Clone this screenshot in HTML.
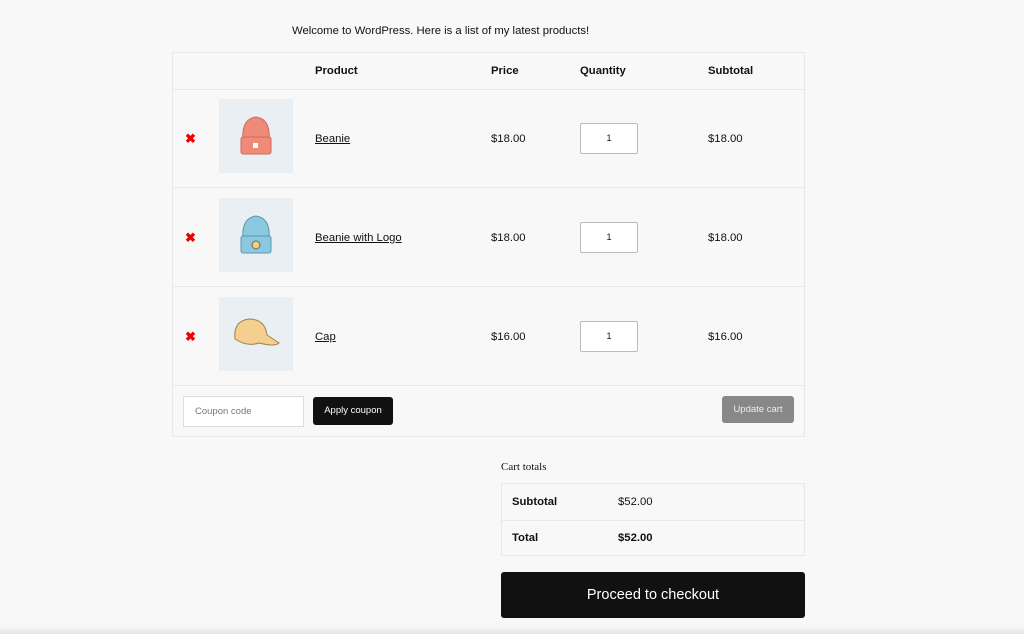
<!DOCTYPE html>
<html><head><style>
body{margin:0;width:1024px;height:634px;background:#f8f8f8;font-family:"Liberation Sans",sans-serif;color:#111;position:relative;overflow:hidden}
.a{position:absolute}
.t{font-size:11.3px}
.b{font-weight:bold}
.line{position:absolute;height:1px;background:#e8e8e8}
.img{position:absolute;left:219px;width:74px;height:74px;background:#eaeff4}
.x{position:absolute;left:185px;color:#e00;font-size:13px;font-weight:bold}
.q{position:absolute;left:580px;width:58px;height:31px;border:1px solid #bbb;border-radius:2px;background:#fff;font-size:9px;text-align:center;line-height:29px;box-sizing:border-box}
u{text-decoration:underline}
</style></head><body>
<div class="a t" style="left:292px;top:25px">Welcome to WordPress. Here is a list of my latest products!</div>
<div class="a" style="left:172px;top:52px;width:633px;height:385px;border:1px solid #e8e8e8;box-sizing:border-box"></div>
<div class="line" style="left:172px;width:633px;top:89px"></div>
<div class="line" style="left:172px;width:633px;top:187px"></div>
<div class="line" style="left:172px;width:633px;top:286px"></div>
<div class="line" style="left:172px;width:633px;top:385px"></div>
<div class="a t b" style="left:315px;top:65px">Product</div>
<div class="a t b" style="left:491px;top:65px">Price</div>
<div class="a t b" style="left:580px;top:65px">Quantity</div>
<div class="a t b" style="left:708px;top:65px">Subtotal</div>

<div class="x" style="top:131px">✖</div>
<div class="img" style="top:99px"><svg width="74" height="74"><path d="M24 42 Q22 20 37 18 Q52 20 50 42Z" fill="#f08a78" stroke="#d06a5a"/><rect x="22" y="38" width="30" height="17" rx="2" fill="#f08a78" stroke="#d06a5a"/><rect x="34" y="44" width="5" height="5" fill="#fff"/></svg></div>
<div class="a t" style="left:315px;top:133px"><u>Beanie</u></div>
<div class="a t" style="left:491px;top:133px">$18.00</div>
<div class="q" style="top:123px">1</div>
<div class="a t" style="left:708px;top:133px">$18.00</div>

<div class="x" style="top:230px">✖</div>
<div class="img" style="top:198px"><svg width="74" height="74"><path d="M24 42 Q22 20 37 18 Q52 20 50 42Z" fill="#8cc8e0" stroke="#5a98b0"/><rect x="22" y="38" width="30" height="17" rx="2" fill="#8cc8e0" stroke="#5a98b0"/><circle cx="37" cy="47" r="4" fill="#f0d080" stroke="#666"/></svg></div>
<div class="a t" style="left:315px;top:232px"><u>Beanie with Logo</u></div>
<div class="a t" style="left:491px;top:232px">$18.00</div>
<div class="q" style="top:222px">1</div>
<div class="a t" style="left:708px;top:232px">$18.00</div>

<div class="x" style="top:329px">✖</div>
<div class="img" style="top:297px"><svg width="74" height="74"><path d="M16 42 Q14 24 30 22 Q46 22 48 38 L60 46 Q56 50 40 46 Q28 50 16 42Z" fill="#f3cf90" stroke="#a08050"/></svg></div>
<div class="a t" style="left:315px;top:331px"><u>Cap</u></div>
<div class="a t" style="left:491px;top:331px">$16.00</div>
<div class="q" style="top:321px">1</div>
<div class="a t" style="left:708px;top:331px">$16.00</div>

<div class="a" style="left:183px;top:396px;width:121px;height:31px;border:1px solid #ddd;background:#fff;box-sizing:border-box;font-size:9.5px;color:#777;line-height:29px;padding-left:11px">Coupon code</div>
<div class="a" style="left:313px;top:397px;width:80px;height:28px;background:#111;border-radius:3px;color:#fff;font-size:9.5px;line-height:28px;text-align:center">Apply coupon</div>
<div class="a" style="left:722px;top:396px;width:72px;height:27px;background:#888;border-radius:3px;color:#eee;font-size:9.5px;line-height:27px;text-align:center">Update cart</div>

<div class="a" style="left:501px;top:461px;font-family:'Liberation Serif',serif;font-size:11px">Cart totals</div>
<div class="a" style="left:501px;top:483px;width:304px;height:73px;border:1px solid #e8e8e8;box-sizing:border-box"></div>
<div class="line" style="left:501px;width:304px;top:520px"></div>
<div class="a t b" style="left:512px;top:496px">Subtotal</div>
<div class="a t" style="left:618px;top:496px">$52.00</div>
<div class="a t b" style="left:512px;top:532px">Total</div>
<div class="a t b" style="left:618px;top:532px">$52.00</div>
<div class="a" style="left:501px;top:572px;width:304px;height:46px;background:#111;border-radius:3px;color:#fff;font-size:14.5px;line-height:46px;text-align:center">Proceed to checkout</div>
<div class="a" style="left:0;top:626px;width:1024px;height:8px;background:linear-gradient(#f8f8f8,#e4e4e4)"></div>
</body></html>
